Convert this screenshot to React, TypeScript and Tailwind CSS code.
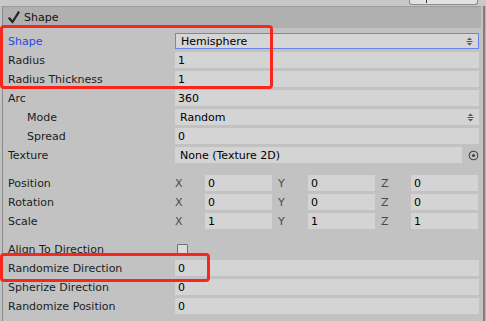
import React from "react";

const Updown = () => (
  <svg width="7" height="9" viewBox="0 0 7 9" className="shrink-0">
    <path d="M3.5 0.5 L6 3 L1 3 Z" fill="#555" />
    <rect x="0.5" y="4" width="6" height="1" fill="#555" />
    <path d="M1 6 L6 6 L3.5 8.5 Z" fill="#555" />
  </svg>
);

const Target = () => (
  <svg width="11" height="11" viewBox="0 0 11 11">
    <circle cx="5.5" cy="5.5" r="4.3" fill="none" stroke="#444" strokeWidth="1.1" />
    <circle cx="5.5" cy="5.5" r="1.6" fill="#444" />
  </svg>
);

const Check = () => (
  <svg width="12" height="13" viewBox="0 0 12 13" className="shrink-0">
    <path d="M1.5 7.5 L4.5 11 L10.5 1.5" fill="none" stroke="#222" strokeWidth="2.2" strokeLinecap="square" />
  </svg>
);

function Row({
  label,
  indent,
  children,
  blue,
}: {
  label: string;
  indent?: boolean;
  children?: React.ReactNode;
  blue?: boolean;
}) {
  return (
    <div className="flex h-[19px] items-start">
      <div
        className={`w-[172px] shrink-0 h-[19px] flex items-center whitespace-nowrap ${
          indent ? "pl-[24px]" : "pl-[5px]"
        } ${blue ? "text-[#2548e4]" : "text-[#1c1c1c]"}`}
      >
        {label}
      </div>
      <div className="flex-1 pt-[1px] pr-[2px]">{children}</div>
    </div>
  );
}

const Field = ({ v }: { v: string }) => (
  <div className="h-[16px] bg-[#d4d4d4] flex items-center pl-[3px] text-black">{v}</div>
);

const Vec = ({ vals }: { vals: string[] }) => (
  <div className="grid grid-cols-3 gap-x-[6px] pr-[1px]">
    {["X", "Y", "Z"].map((a, i) => (
      <div key={a} className="flex h-[16px]">
        <div className="w-[30px] shrink-0 flex items-center text-[#4a4a4a]">{a}</div>
        <div className="flex-1 bg-[#d4d4d4] flex items-center pl-[3px] text-black">{vals[i]}</div>
      </div>
    ))}
  </div>
);

export default function App() {
  return (
    <div className="w-[486px] h-[321px] bg-[#c2c2c2] overflow-hidden relative font-['DejaVu_Sans',sans-serif] text-[11px] leading-none">
      <div className="h-[6px] bg-[#c8c8c8] flex justify-end pr-[8px]">
        <div className="w-[69px] h-[5px] bg-[#e2e2e2] border border-t-0 border-[#8c8c8c] rounded-b-[3px] flex justify-center">
          <div className="w-[1px] h-[3px] bg-[#333] -ml-[34px]" />
        </div>
      </div>
      <div className="flex h-[315px]">
        <div className="flex-1 pl-[2px] flex flex-col">
          <div className="flex-1 border-l border-[#8a8a8a] flex flex-col">
            <div className="h-[22px] bg-[#b0b0b0] border-t border-[#9c9c9c] flex items-center pl-[5px] gap-[4px] text-[#111]">
              <Check />
              <span>Shape</span>
            </div>
            <div className="pt-[4px] flex flex-col">
              <Row label="Shape" blue>
                <div className="h-[16px] bg-[#d6d6d6] border border-[#6b84e8] flex items-center pl-[5px] pr-[5px] justify-between text-black">
                  <span>Hemisphere</span>
                  <Updown />
                </div>
              </Row>
              <Row label="Radius">
                <Field v="1" />
              </Row>
              <Row label="Radius Thickness">
                <Field v="1" />
              </Row>
              <Row label="Arc">
                <Field v="360" />
              </Row>
              <Row label="Mode" indent>
                <div className="h-[16px] bg-[#d4d4d4] flex items-center pl-[5px] pr-[5px] justify-between text-black">
                  <span>Random</span>
                  <Updown />
                </div>
              </Row>
              <Row label="Spread" indent>
                <Field v="0" />
              </Row>
              <Row label="Texture">
                <div className="flex items-center gap-[5px]">
                  <div className="flex-1 h-[16px] bg-[#d4d4d4] flex items-center pl-[5px] text-black">None (Texture 2D)</div>
                  <div className="w-[12px] flex items-center justify-center">
                    <Target />
                  </div>
                </div>
              </Row>
              <div className="h-[9px]" />
              <Row label="Position">
                <Vec vals={["0", "0", "0"]} />
              </Row>
              <Row label="Rotation">
                <Vec vals={["0", "0", "0"]} />
              </Row>
              <Row label="Scale">
                <Vec vals={["1", "1", "1"]} />
              </Row>
              <div className="h-[9px]" />
              <Row label="Align To Direction">
                <div className="h-[16px] flex items-start pl-[2px] pt-[3px]">
                  <div className="w-[11px] h-[11px] border border-[#6f6f6f] bg-[#dcdcdc] rounded-[1px]" />
                </div>
              </Row>
              <Row label="Randomize Direction">
                <Field v="0" />
              </Row>
              <Row label="Spherize Direction">
                <Field v="0" />
              </Row>
              <Row label="Randomize Position">
                <Field v="0" />
              </Row>
            </div>
          </div>
        </div>
        <div className="w-[2px]" />
        <div className="w-[2px] bg-[#7e7e7e]" />
        <div className="w-[1px] bg-[#b5b5b5]" />
      </div>
      <div className="h-[6px] border-t border-[#8a8a8a] bg-[#bdbdbd] pl-[8px] overflow-hidden">
        <div className="pt-[1px]">
          <Check />
        </div>
      </div>

      <div className="absolute left-0 top-[25px] w-[273px] h-[64px] border-[3px] border-[#f8261b] rounded-[4px]" />
      <div className="absolute left-0 top-[253px] w-[210px] h-[29px] border-[3px] border-[#f8261b] rounded-[4px]" />
    </div>
  );
}
